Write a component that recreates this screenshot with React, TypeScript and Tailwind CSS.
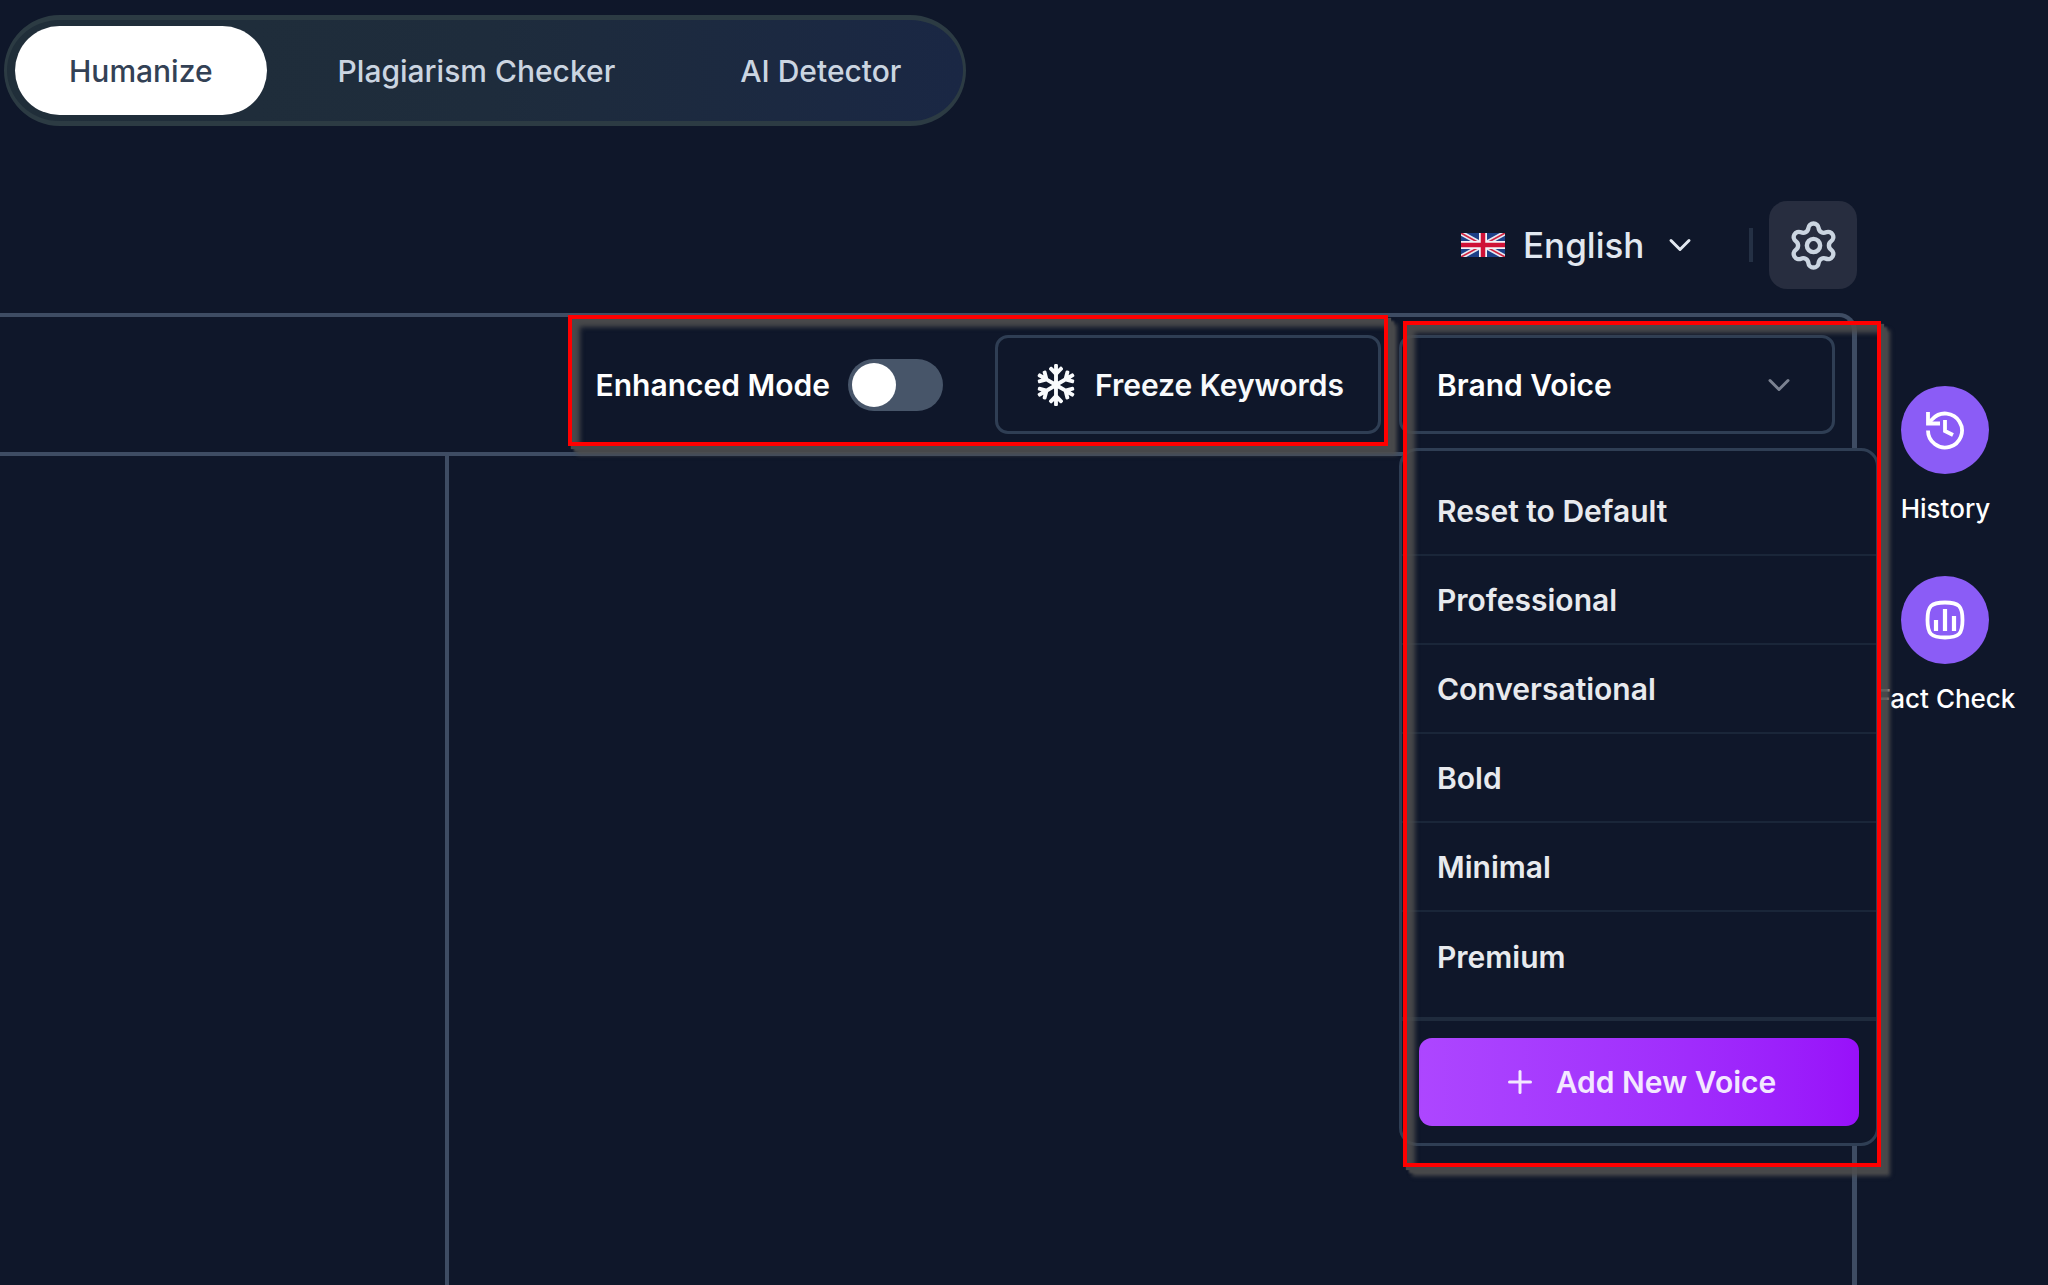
import { useState } from "react";
import { ChevronDown, Plus, Settings } from "lucide-react";
import { FaRegSnowflake } from "react-icons/fa";

const tabs = ["Humanize", "Plagiarism Checker", "AI Detector"];
const voices = ["Reset to Default", "Professional", "Conversational", "Bold", "Minimal", "Premium"];

function Flag() {
  return (
    <svg viewBox="0 0 44 24" className="h-6 w-11" aria-hidden="true">
      <rect width="44" height="24" fill="#1c3f86" />
      <path d="M0 0 44 24M44 0 0 24" stroke="#e6e9f2" strokeWidth="5" />
      <path d="M0 0 44 24M44 0 0 24" stroke="#d0233f" strokeWidth="1.6" />
      <path d="M22 0V24M0 12H44" stroke="#f3f4f8" strokeWidth="8" />
      <path d="M22 0V24M0 12H44" stroke="#cf1237" strokeWidth="4.5" />
    </svg>
  );
}

function HistoryIcon() {
  return (
    <svg viewBox="0 0 40 40" fill="none" stroke="white" strokeWidth="3.8" className="size-10" aria-hidden="true">
      <path d="M3 20.5A17 17 0 1 0 7.5 9L3 13.5" />
      <path d="M3 2V13.5H15" />
      <path d="M20 10V21L28 25" />
    </svg>
  );
}

function ChartIcon() {
  return (
    <svg viewBox="0 0 40 40" fill="none" stroke="white" strokeWidth="3.8" className="size-10" aria-hidden="true">
      <path d="M20 2.5C34 2.5 37.5 6 37.5 20S34 37.5 20 37.5 2.5 34 2.5 20 6 2.5 20 2.5Z" />
      <path d="M11 20V31M20 9V31M29 16V31" strokeWidth="4.2" />
    </svg>
  );
}

/** Red outline with a soft grey shadow, drawn around its positioned parent's area. */
function Highlight({ className }: { className: string }) {
  return (
    <div className={`pointer-events-none absolute ${className}`} aria-hidden="true">
      <div className="absolute inset-0 opacity-90 shadow-[3px_3px_1px_#4f4f4f,6px_6px_2px_#4f4f4f,9px_9px_4px_#4f4f4f,inset_12px_12px_5px_#4f4f4f]" />
      <div className="absolute inset-0 border-4 border-[#ff0000]" />
    </div>
  );
}

export default function App() {
  const [tab, setTab] = useState(0);
  return (
    <div className="flex min-h-screen flex-col overflow-hidden bg-[#0f172a] font-['Inter',sans-serif] text-[30px] leading-[44px] text-white">
      <nav className="ml-1 mt-[15px] flex w-fit rounded-full border-x-[3px] border-y-[5px] border-[#2c3b43] bg-linear-to-r from-[#202e39] via-[#1e2c3c] to-[#1a2744] px-2 py-[6px]">
        {tabs.map((t, i) => (
          <button
            key={t}
            onClick={() => setTab(i)}
            className={
              i === tab
                ? "mr-[17px] h-[89px] rounded-full bg-white px-[54px] font-medium text-[#334155]"
                : "mr-[17px] h-[89px] rounded-full px-[54px] font-medium text-[#cbd5e1] last:mr-0"
            }
          >
            {t}
          </button>
        ))}
      </nav>

      <header className="mr-[191px] mt-[75px] flex h-[88px] items-center justify-end">
        <Flag />
        <label className="relative ml-[18px] flex items-center">
          <select aria-label="Language" className="appearance-none bg-transparent pr-[53px] text-[35px] font-medium text-[#e2e8f0]">
            <option>English</option>
          </select>
          <ChevronDown className="pointer-events-none absolute right-0 size-9 text-[#e2e8f0]" strokeWidth={2} />
        </label>
        <span className="ml-[51px] mr-4 h-[34px] w-1 bg-[#243044]" />
        <button aria-label="Settings" className="flex size-[88px] items-center justify-center rounded-[18px] bg-[#272d3f] text-[#cbd5e1]">
          <Settings className="size-[53px]" strokeWidth={2} />
        </button>
      </header>

      <div className="mt-6 flex flex-1">
        <main className="flex min-w-0 flex-1 flex-col rounded-tr-[18px] border-r-[5px] border-t-4 border-[#3e4c63]">
          <div className="flex items-center justify-end gap-[18px] border-b-4 border-[#3e4c63] py-[18px] pr-[17px]">
            <div className="relative flex items-center gap-[52px]">
              <label className="flex items-center gap-[18px] font-semibold">
                Enhanced Mode
                <input
                  type="checkbox"
                  role="switch"
                  className="flex h-[52px] w-[95px] appearance-none items-center rounded-full bg-[#475569] px-1 before:size-11 before:rounded-full before:bg-white checked:justify-end"
                />
              </label>
              <button className="flex h-[99px] items-center gap-[18px] rounded-[13px] border-[3px] border-[#2f3e54] pl-[37px] pr-[34px] font-semibold text-[#f8fafc]">
                <FaRegSnowflake className="size-[42px]" />
                Freeze Keywords
              </button>
              <Highlight className="-bottom-3 -left-[28px] -right-[7px] -top-5" />
            </div>

            <div className="relative z-10 w-[436px]">
              <button aria-haspopup="menu" aria-expanded="true" className="flex h-[99px] w-full items-center justify-between rounded-[13px] border-[3px] border-[#2f3e54] px-[35px] font-semibold">
                Brand Voice
                <ChevronDown className="size-9 text-[#7b8291]" strokeWidth={2} />
              </button>
              <div role="menu" className="absolute left-0 top-full mt-[14px] w-[480px] rounded-[18px] border-[3px] border-[#2f3e54] bg-[#0f172a] pt-4">
                {voices.map((v) => (
                  <button
                    role="menuitem"
                    key={v}
                    className="flex h-[89px] w-full items-center border-b-2 border-[#1a2639] px-[35px] text-left font-semibold text-[#e8eaee] last-of-type:border-b-0"
                  >
                    {v}
                  </button>
                ))}
                <div className="mt-4 border-t-4 border-[#1f2b3d] p-[17px]">
                  <button className="flex h-[88px] w-full items-center justify-center gap-[18px] rounded-[13px] bg-linear-to-r from-[#ad46ff] to-[#9810fa] font-semibold text-[#f3e8ff]">
                    <Plus className="size-9" strokeWidth={2} />
                    Add New Voice
                  </button>
                </div>
              </div>
              <Highlight className="-right-[46px] -top-[14px] left-1 h-[846px]" />
            </div>
          </div>
          <div className="flex flex-1">
            <section className="w-[449px] border-r-4 border-[#3e4c63]" />
            <section className="flex-1" />
          </div>
        </main>

        <aside className="flex w-[191px] flex-col items-center gap-[45px] pr-[14px] pt-[73px] text-[26px] font-medium">
          <button className="flex flex-col items-center gap-[13px]">
            <span className="flex size-[88px] items-center justify-center rounded-full bg-[#8b5cf6]">
              <HistoryIcon />
            </span>
            History
          </button>
          <button className="flex flex-col items-center gap-[13px] whitespace-nowrap">
            <span className="flex size-[88px] items-center justify-center rounded-full bg-[#8b5cf6]">
              <ChartIcon />
            </span>
            Fact Check
          </button>
        </aside>
      </div>
    </div>
  );
}
